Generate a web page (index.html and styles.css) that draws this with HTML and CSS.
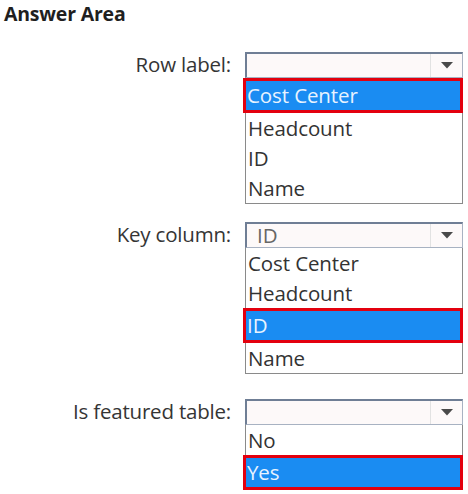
FILE: index.html
```html
<!DOCTYPE html>
<html>
<head>
<meta charset="utf-8">
<link rel="stylesheet" href="styles.css">
</head>
<body>
<h1 class="title">Answer Area</h1>
<div class="form">
  <div class="field field-row">
    <div class="label">Row label:</div>
    <div class="combo">
      <div class="select"><span class="value"></span><span class="btn"><svg width="12" height="7" viewBox="0 0 12 7"><path d="M0 0H12L6 6.5Z" fill="#4a4a4a"/></svg></span></div>
      <ul class="list">
        <li class="selected">Cost Center</li>
        <li>Headcount</li>
        <li>ID</li>
        <li>Name</li>
      </ul>
    </div>
  </div>
  <div class="field field-key">
    <div class="label">Key column:</div>
    <div class="combo">
      <div class="select"><span class="value">ID</span><span class="btn"><svg width="12" height="7" viewBox="0 0 12 7"><path d="M0 0H12L6 6.5Z" fill="#4a4a4a"/></svg></span></div>
      <ul class="list">
        <li>Cost Center</li>
        <li>Headcount</li>
        <li class="selected">ID</li>
        <li>Name</li>
      </ul>
    </div>
  </div>
  <div class="field field-feat">
    <div class="label">Is featured table:</div>
    <div class="combo">
      <div class="select"><span class="value"></span><span class="btn"><svg width="12" height="7" viewBox="0 0 12 7"><path d="M0 0H12L6 6.5Z" fill="#4a4a4a"/></svg></span></div>
      <ul class="list">
        <li>No</li>
        <li class="selected last">Yes</li>
      </ul>
    </div>
  </div>
</div>
</body>
</html>
```
FILE: styles.css
```css
html, body {
  margin: 0;
  padding: 0;
  background: #ffffff;
}
body {
  font-family: "Open Sans", "Noto Sans", sans-serif;
  color: #333333;
}
.title {
  margin: 0;
  padding: 0 0 0 4px;
  font-size: 19.5px;
  line-height: 28px;
  font-weight: 700;
  color: #1f1f1f;
  letter-spacing: -0.2px;
}
.form {
  display: flex;
  flex-direction: column;
}
.field {
  display: grid;
  grid-template-columns: 231px 218px;
  column-gap: 14px;
  align-items: start;
}
.field-row { margin-top: 24px; }
.field-key { margin-top: 18px; }
.field-feat { margin-top: 25px; }
.label {
  text-align: right;
  font-size: 20.5px;
  line-height: 24px;
  color: #353535;
  letter-spacing: -0.2px;
}
.combo {
  display: flex;
  flex-direction: column;
}
.select {
  display: flex;
  height: 26px;
  box-sizing: border-box;
  border: 1px solid #a8b2c2;
  border-top: 2px solid #6f7e95;
  border-left: 2px solid #6f7e95;
  background: #fdf9f9;
}
.value {
  flex: 1;
  padding-left: 10px;
  font-size: 20.5px;
  line-height: 23px;
  color: #666666;
}
.btn {
  width: 31px;
  border-left: 1px solid #e2e2e2;
  display: flex;
  align-items: center;
  justify-content: center;
}
.list {
  list-style: none;
  margin: 0;
  padding: 0;
  border: 1px solid #8a8a8a;
  border-top: none;
  background: #ffffff;
}
.list li {
  height: 30px;
  line-height: 30px;
  padding-left: 2px;
  font-size: 20.5px;
  color: #333333;
  letter-spacing: -0.1px;
}
.list li.selected {
  height: 29px;
  line-height: 29px;
  margin: 0 -1px 0 -3px;
  border: 3px solid #e3000e;
  background: #1a8cf2;
  color: #e8f3ff;
  padding-left: 1px;
}
.list li.last {
  margin-bottom: -1px;
}
```
